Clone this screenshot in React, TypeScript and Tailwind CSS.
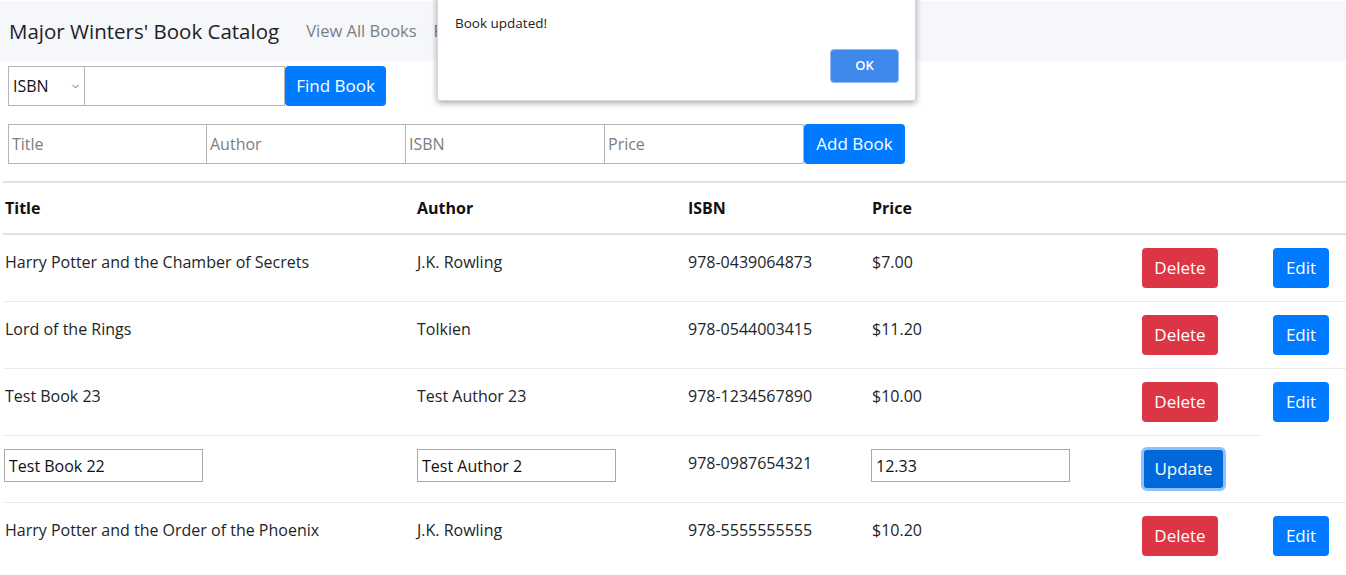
import React from "react";
import { ChevronDown } from "lucide-react";

const font = { fontFamily: '"Open Sans", "Noto Sans", sans-serif' };

type Book = { title: string; author: string; isbn: string; price: string; editing?: boolean };

const books: Book[] = [
  { title: "Harry Potter and the Chamber of Secrets", author: "J.K. Rowling", isbn: "978-0439064873", price: "$7.00" },
  { title: "Lord of the Rings", author: "Tolkien", isbn: "978-0544003415", price: "$11.20" },
  { title: "Test Book 23", author: "Test Author 23", isbn: "978-1234567890", price: "$10.00" },
  { title: "Test Book 22", author: "Test Author 2", isbn: "978-0987654321", price: "12.33", editing: true },
  { title: "Harry Potter and the Order of the Phoenix", author: "J.K. Rowling", isbn: "978-5555555555", price: "$10.20" },
];

function EditInput({ value }: { value: string }) {
  return (
    <input
      readOnly
      value={value}
      className="w-[199px] h-[33px] border border-[#a9a9a9] px-[4px] text-[16px] text-[#111] outline-none bg-white"
      style={font}
    />
  );
}

export default function App() {
  return (
    <div className="relative w-[1346px] h-[575px] overflow-hidden bg-white text-[#212529]" style={font}>
      {/* Navbar */}
      <div className="h-[60px] mt-[1px] bg-[#f5f7fa] flex items-center pl-[9px]">
        <span className="text-[20.5px] text-[#222] leading-none">Major Winters' Book Catalog</span>
        <span className="ml-[27px] text-[16.5px] text-[#7a7f84] leading-none">View All Books</span>
        <span className="ml-[17px] text-[16.5px] text-[#7a7f84] leading-none">F</span>
      </div>

      {/* Search row */}
      <div className="flex mt-[5px] ml-[8px] h-[40px]">
        <div className="relative w-[77px] h-[40px] border border-[#b5b5b5] flex items-center pl-[4px] text-[16px] text-[#111]">
          ISBN
          <ChevronDown className="absolute left-[61px] top-[14px]" size={11} strokeWidth={1.6} color="#333" />
        </div>
        <input readOnly className="w-[200px] h-[40px] border border-l-0 border-[#b5b5b5] outline-none" />
        <button className="w-[101px] h-[40px] bg-[#007bff] text-white text-[17px] rounded-[4px]" style={font}>
          Find Book
        </button>
      </div>

      {/* Add row */}
      <div className="flex mt-[18px] ml-[8px] h-[40px]">
        {["Title", "Author", "ISBN", "Price"].map((p, i) => (
          <input
            key={p}
            readOnly
            placeholder={p}
            className={`w-[199px] h-[40px] border border-[#b5b5b5] ${i > 0 ? "border-l-0" : ""} pl-[3px] text-[16px] placeholder:text-[#7d7d7d] outline-none`}
            style={font}
          />
        ))}
        <button className="w-[101px] h-[40px] bg-[#007bff] text-white text-[17px] rounded-[4px]" style={font}>
          Add Book
        </button>
      </div>

      {/* Table */}
      <table className="table-fixed border-collapse ml-[3px] mt-[17px] w-[1343px] text-[16px]">
        <colgroup>
          <col className="w-[412px]" />
          <col className="w-[271px]" />
          <col className="w-[184px]" />
          <col className="w-[269px]" />
          <col className="w-[123px]" />
          <col className="w-[84px]" />
        </colgroup>
        <thead>
          <tr className="border-t-2 border-b-2 border-[#dee2e6]">
            {["Title", "Author", "ISBN", "Price", "", ""].map((h, i) => (
              <th key={i} className="text-left font-bold pl-[2px] pt-[13px] pb-[13px] leading-[24px] text-[#111]">
                {h}
              </th>
            ))}
          </tr>
        </thead>
        <tbody>
          {books.map((b, idx) =>
            b.editing ? (
              <tr key={idx}>
                <td className="align-top pt-[13px] pl-[1px] border-t border-[#e9ecef]">
                  <EditInput value={b.title} />
                </td>
                <td className="align-top pt-[13px] pl-[2px] border-t border-[#e9ecef]">
                  <EditInput value={b.author} />
                </td>
                <td className="align-top pt-[14px] pl-[2px] leading-[26px] border-t border-[#e9ecef]">{b.isbn}</td>
                <td className="align-top pt-[13px] pl-[1px] border-t border-[#e9ecef]">
                  <EditInput value={b.price} />
                </td>
                <td className="align-top pt-[11px] pb-[11px] pl-[2px] border-t border-[#e9ecef]">
                  <button
                    className="w-[85px] h-[44px] bg-[#0069d9] text-white text-[17px] rounded-[6px] border-[3px] border-[#8cc2fb]"
                    style={font}
                  >
                    Update
                  </button>
                </td>
                <td></td>
              </tr>
            ) : (
              <tr key={idx} className="border-t border-[#e9ecef]">
                <td className="align-top pt-[14px] pl-[2px] leading-[26px]">{b.title}</td>
                <td className="align-top pt-[14px] pl-[2px] leading-[26px]">{b.author}</td>
                <td className="align-top pt-[14px] pl-[2px] leading-[26px]">{b.isbn}</td>
                <td className="align-top pt-[14px] pl-[2px] leading-[26px]">{b.price}</td>
                <td className="align-top pt-[13px] pb-[13px] pl-[3px]">
                  <button className="w-[76px] h-[40px] bg-[#dc3545] text-white text-[17px] rounded-[4px]" style={font}>
                    Delete
                  </button>
                </td>
                <td className="align-top pt-[13px] pb-[13px] pl-[11px]">
                  <button className="w-[56px] h-[40px] bg-[#007bff] text-white text-[17px] rounded-[4px]" style={font}>
                    Edit
                  </button>
                </td>
              </tr>
            )
          )}
        </tbody>
      </table>

      {/* Alert dialog */}
      <div className="absolute left-[437px] top-[-20px] w-[479px] h-[121px] bg-white rounded-[3px] shadow-[0_2px_6px_rgba(0,0,0,0.35)] border border-[#d8d8d8]">
        <div className="pl-[17px] pt-[32px] text-[13.5px] text-[#222] leading-[20px]">Book updated!</div>
        <div className="flex justify-end pr-[16px] pt-[16px]">
          <button
            className="w-[69px] h-[34px] bg-[#4089ec] text-white text-[13px] font-semibold rounded-[4px] border border-[#8fb8f2]"
            style={font}
          >
            OK
          </button>
        </div>
      </div>
    </div>
  );
}
